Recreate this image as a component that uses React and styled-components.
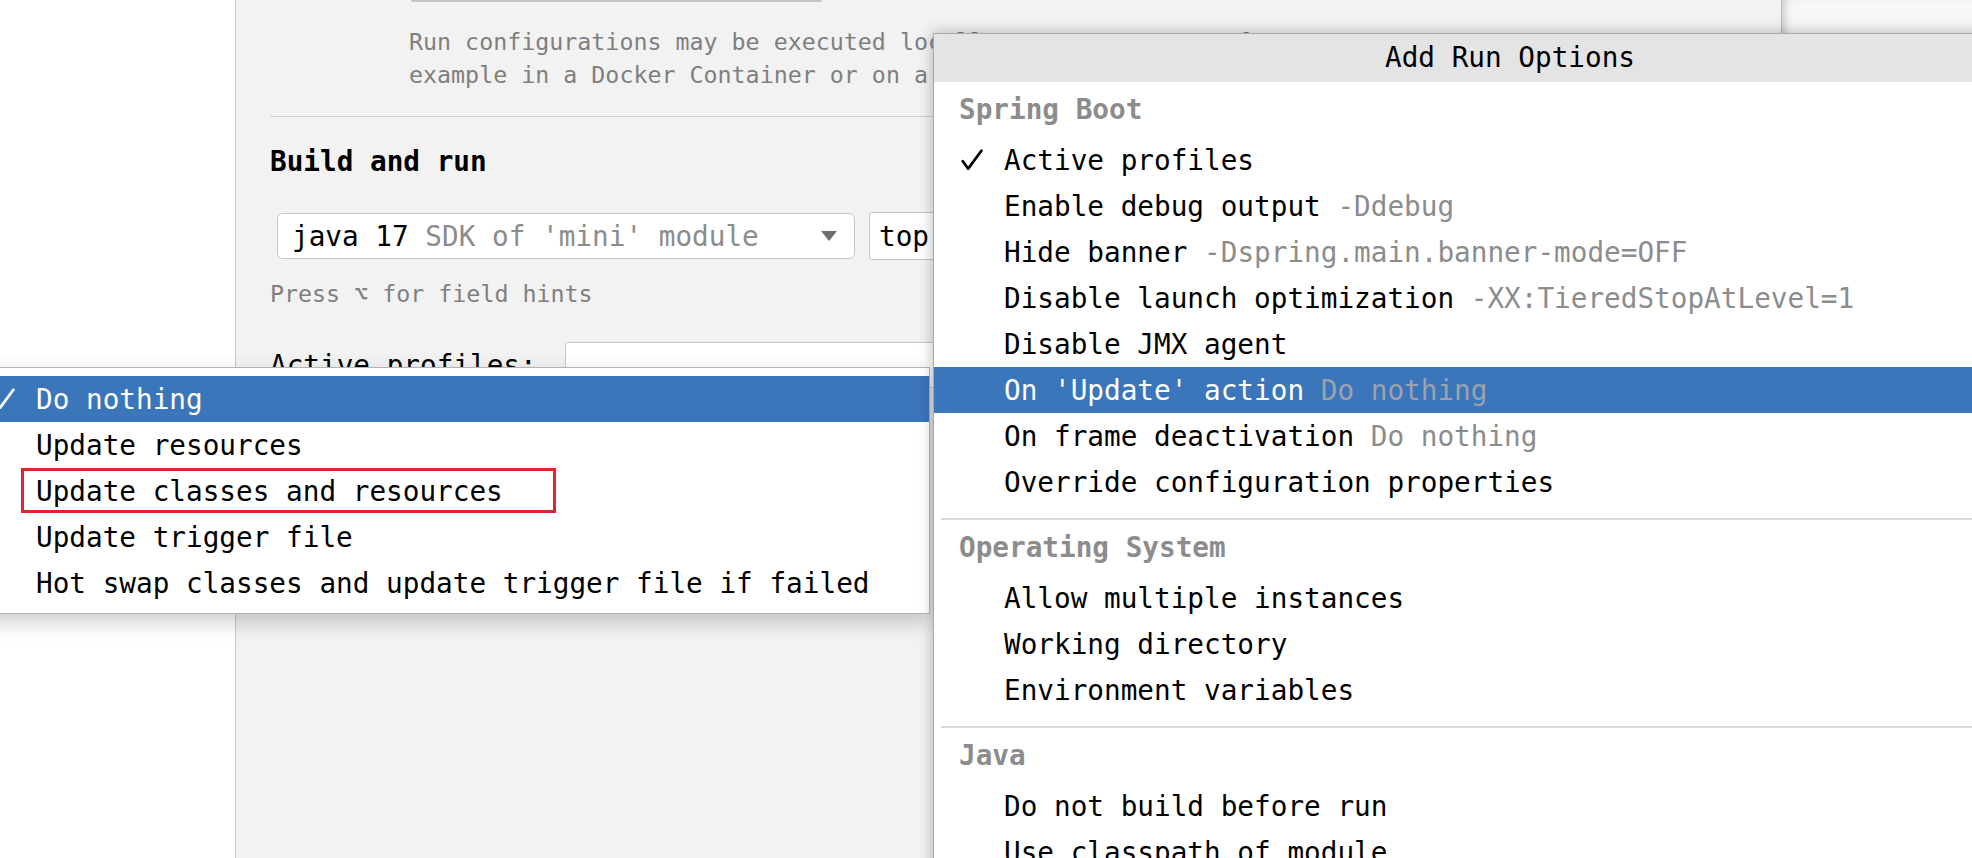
import React from "react";
import styled, { createGlobalStyle } from "styled-components";

const MONO = `"DejaVu Sans Mono", "Liberation Mono", monospace`;
const BLUE = "#3b75ba";

const GlobalStyle = createGlobalStyle`
  html, body {
    margin: 0;
    padding: 0;
    overflow: hidden;
  }
  body {
    font-family: ${MONO};
    background: #fff;
    color: #000;
  }
`;

const Screen = styled.div`
  position: relative;
  width: 1972px;
  height: 858px;
  overflow: hidden;
  display: flex;
`;

const Sidebar = styled.div`
  width: 235px;
  flex-shrink: 0;
  background: #fff;
`;

const Panel = styled.div`
  width: 1547px;
  flex-shrink: 0;
  box-sizing: border-box;
  background: #f2f2f2;
  border-left: 1px solid #c9c9c9;
  border-right: 1px solid #b9b9b9;
  padding-left: 34px;
  display: flex;
  flex-direction: column;
  overflow: hidden;
`;

const Outside = styled.div`
  flex: 1;
  background: #f7f7f7;
  box-shadow: inset 8px 0 10px -6px rgba(0, 0, 0, 0.22);
`;

const FieldStub = styled.div`
  margin-left: 141px;
  width: 411px;
  height: 2px;
  background: #c3c3c3;
  border-radius: 0 0 4px 4px;
`;

const Description = styled.div`
  margin: 23px 0 0 139px;
  font-size: 23.3px;
  line-height: 33px;
  color: #7f7f7f;
  white-space: nowrap;
`;

const Divider = styled.div`
  margin-top: 25px;
  height: 1px;
  background: #d1d1d1;
`;

const SectionTitle = styled.div`
  margin-top: 28px;
  font-size: 27.7px;
  line-height: 34px;
  font-weight: bold;
`;

const FieldRow = styled.div`
  display: flex;
  align-items: center;
  gap: 14px;
  margin: 33px 0 0 7px;
`;

const ComboBox = styled.div`
  width: 578px;
  height: 46px;
  box-sizing: border-box;
  display: flex;
  align-items: center;
  justify-content: space-between;
  padding: 0 17px 0 14px;
  background: #fff;
  border: 1px solid #c6c6c6;
  border-radius: 6px;
  font-size: 27.7px;
  white-space: nowrap;
`;

const Muted = styled.span`
  color: ${(p) => p.color || "#8c8c8c"};
`;

const TextField = styled.div`
  width: ${(p) => p.width || 600}px;
  height: ${(p) => p.height || 46}px;
  box-sizing: border-box;
  display: flex;
  align-items: center;
  padding-left: 9px;
  background: #fff;
  border: 1px solid #c6c6c6;
  border-radius: 2px;
  font-size: 27.7px;
  white-space: nowrap;
  overflow: hidden;
`;

const Hint = styled.div`
  margin-top: 19px;
  font-size: 23.3px;
  line-height: 30px;
  color: #7f7f7f;
`;

const LabeledRow = styled.div`
  display: flex;
  align-items: center;
  margin-top: 33px;
`;

const Label = styled.div`
  width: 295px;
  font-size: 27.7px;
  white-space: nowrap;
`;

/* popup menus lying over the panel */

const RunOptions = styled.div`
  position: absolute;
  left: 933px;
  top: 33px;
  width: 1154px;
  height: 1000px;
  box-sizing: border-box;
  background: #fff;
  border: 1px solid #a9a9a9;
  box-shadow: 0 0 14px rgba(0, 0, 0, 0.28);
`;

const PopupTitle = styled.div`
  height: 48px;
  line-height: 48px;
  text-align: center;
  background: #e4e4e4;
  font-size: 27.7px;
`;

const Group = styled.div`
  padding-bottom: 13px;
`;

const GroupLabel = styled.div`
  height: 55px;
  display: flex;
  align-items: center;
  padding-left: 25px;
  font-size: 27.7px;
  font-weight: bold;
  color: #8c8c8c;
`;

const GroupDivider = styled.div`
  margin-left: 7px;
  height: 2px;
  background: #dadada;
`;

const OptionRow = styled.div`
  position: relative;
  height: 46px;
  display: flex;
  align-items: center;
  padding-left: ${(p) => p.indent}px;
  background: ${(p) => (p.selected ? BLUE : "transparent")};
  color: ${(p) => (p.selected ? "#fff" : "#000")};
  font-size: 27.7px;
  white-space: nowrap;
`;

const CheckSlot = styled.span`
  width: 43px;
  flex-shrink: 0;
  display: flex;
  align-items: center;
`;

const ActionMenu = styled.div`
  position: absolute;
  left: -33px;
  top: 367px;
  width: 963px;
  height: 247px;
  box-sizing: border-box;
  padding: 8px 0 7px;
  background: #fff;
  border: 1px solid #b4b4b4;
  border-left: none;
  box-shadow: 0 8px 20px rgba(0, 0, 0, 0.2);
`;

const Marker = styled.span`
  position: absolute;
  left: 54px;
  top: 0;
  width: 535px;
  height: 45px;
  box-sizing: border-box;
  border: 3px solid #e0242b;
  pointer-events: none;
`;

const Check = () => (
  <svg width="22" height="22" viewBox="0 0 22 22">
    <path
      d="M1.8 12.2 L7.2 19.6 L20.4 1.8"
      fill="none"
      stroke="currentColor"
      strokeWidth="2.7"
      strokeLinecap="round"
      strokeLinejoin="round"
    />
  </svg>
);

const Arrow = () => (
  <svg width="16" height="10" viewBox="0 0 16 10">
    <polygon points="0,0 16,0 8,10" fill="#6e6e6e" />
  </svg>
);

const groups = [
  {
    name: "Spring Boot",
    items: [
      { label: "Active profiles", checked: true },
      { label: "Enable debug output", hint: "-Ddebug" },
      { label: "Hide banner", hint: "-Dspring.main.banner-mode=OFF" },
      { label: "Disable launch optimization", hint: "-XX:TieredStopAtLevel=1" },
      { label: "Disable JMX agent" },
      { label: "On 'Update' action", hint: "Do nothing", selected: true },
      { label: "On frame deactivation", hint: "Do nothing" },
      { label: "Override configuration properties" },
    ],
  },
  {
    name: "Operating System",
    items: [
      { label: "Allow multiple instances" },
      { label: "Working directory" },
      { label: "Environment variables" },
    ],
  },
  {
    name: "Java",
    items: [
      { label: "Do not build before run" },
      { label: "Use classpath of module" },
    ],
  },
];

const actions = [
  { label: "Do nothing", checked: true, selected: true },
  { label: "Update resources" },
  { label: "Update classes and resources", marked: true },
  { label: "Update trigger file" },
  { label: "Hot swap classes and update trigger file if failed" },
];

export default function App() {
  return (
    <>
      <GlobalStyle />
      <Screen>
        <Sidebar />
        <Panel>
          <FieldStub />
          <Description>
            Run configurations may be executed locally or on a target: for
            <br />
            example in a Docker Container or on a remote host using SSH.
          </Description>
          <Divider />
          <SectionTitle>Build and run</SectionTitle>
          <FieldRow>
            <ComboBox>
              <span>
                java 17 <Muted>SDK of 'mini' module</Muted>
              </span>
              <Arrow />
            </ComboBox>
            <TextField width={640} height={48}>
              top.mini.MiniApplication
            </TextField>
          </FieldRow>
          <Hint>Press ⌥ for field hints</Hint>
          <LabeledRow>
            <Label>Active profiles:</Label>
            <TextField width={700} />
          </LabeledRow>
        </Panel>
        <Outside />

        <ActionMenu>
          {actions.map((a) => (
            <OptionRow key={a.label} indent={26} selected={a.selected}>
              <CheckSlot>{a.checked && <Check />}</CheckSlot>
              {a.label}
              {a.marked && <Marker />}
            </OptionRow>
          ))}
        </ActionMenu>

        <RunOptions>
          <PopupTitle>Add Run Options</PopupTitle>
          {groups.map((g, i) => (
            <React.Fragment key={g.name}>
              {i > 0 && <GroupDivider />}
              <Group>
                <GroupLabel>{g.name}</GroupLabel>
                {g.items.map((it) => (
                  <OptionRow key={it.label} indent={27} selected={it.selected}>
                    <CheckSlot>{it.checked && <Check />}</CheckSlot>
                    {it.label}
                    {it.hint && (
                      <Muted color={it.selected ? "#9aa3ad" : "#8c8c8c"}>
                        &nbsp;{it.hint}
                      </Muted>
                    )}
                  </OptionRow>
                ))}
              </Group>
            </React.Fragment>
          ))}
        </RunOptions>
      </Screen>
    </>
  );
}
